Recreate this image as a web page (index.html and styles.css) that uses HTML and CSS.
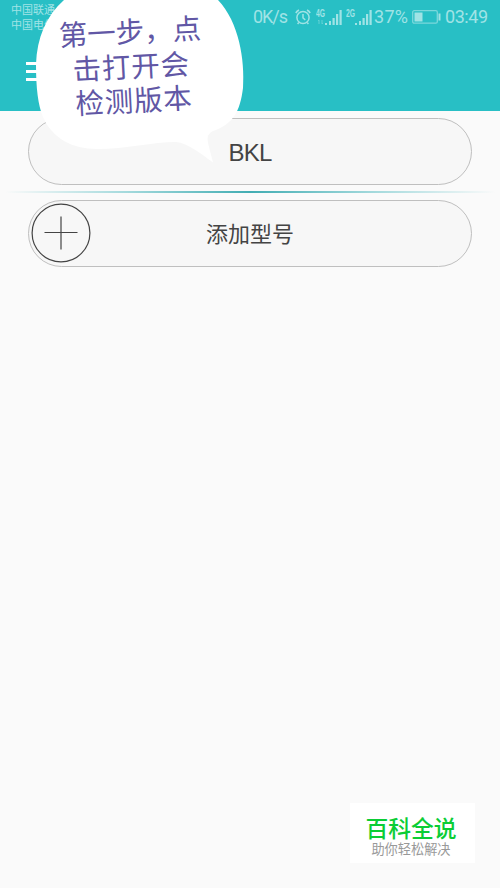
FILE: index.html
```html
<!DOCTYPE html>
<html lang="zh-CN">
<head>
<meta charset="utf-8">
<title>BKL</title>
<link rel="stylesheet" href="styles.css">
</head>
<body>
<header class="header">
  <div class="status">
    <div class="carriers"><span>中国联通</span><span>中国电信</span></div>
    <div class="indicators">
      <svg class="speed" width="36" height="20"><text x="0" y="16" textLength="35">0K/s</text></svg>
      <svg class="alarm" width="16" height="16" viewBox="0 0 16 16"><circle cx="8" cy="8.5" r="6.1"/><path d="M8 5v4l2.3 1.8M.8 4Q2 2 4 1M15.200 4Q14 2 12 1M3.800 13.500l-1.200 1.500M12.200 13.500l1.200 1.500"/></svg>
      <svg class="signal first" width="26" height="17" viewBox="0 0 26 17"><text x="0" y="7.5" textLength="9" lengthAdjust="spacingAndGlyphs">4G</text><path class="faint" d="M3 15v-4l-1 1M6 11v4l1-1"/><path d="M9 16v-2h2v2zM13 16v-4h2v4zM16.5 16V9h2.200V16zM20 16V5h2.200V16zM23.500 16V1h2.200V16z"/></svg>
      <svg class="signal" width="26" height="17" viewBox="0 0 26 17"><text x="0" y="7.5" textLength="9" lengthAdjust="spacingAndGlyphs">2G</text><path d="M9 16v-2h2v2zM13 16v-4h2v4zM16.500 16V9h2.200V16zM20 16V5h2.200V16zM23.500 16V1h2.200V16z"/></svg>
      <svg class="percent" width="36" height="20"><text x="0" y="16" textLength="34">37%</text></svg>
      <svg class="battery" width="29" height="14" viewBox="0 0 29 14"><rect class="case" x=".7" y=".7" width="24.600" height="12.500" rx="1.500"/><path d="M2.500 2.500h8v9h-8zM26.500 3.500h2v7h-2z"/></svg>
      <svg class="clock" width="44" height="20"><text x="0" y="16" textLength="43">03:49</text></svg>
    </div>
  </div>
  <svg class="menu" width="24" height="19" viewBox="0 0 24 19"><path d="M0 1.500h24M0 9.500h24M0 17.500h24"/></svg>
</header>
<main class="content">
  <div class="pill"><span class="model">BKL</span></div>
  <div class="divider"></div>
  <div class="pill">
    <svg class="add" width="60" height="60" viewBox="0 0 60 60"><circle cx="30" cy="30" r="28.900"/><path d="M13.500 29.500h33M30 13.500v33"/></svg>
    <span>添加型号</span>
  </div>
</main>
<aside class="bubble">
  <svg width="210" height="165" viewBox="35 0 210 165"><path d="M64 0C46 16 37 38 36 64C36 88 38 105 43 117C52 138 72 149 97 149C126 149 153 142 176 142C188 143 201 154 213 162.500L208 143Q206 134 213 131C233 124 240 112 243 88C245 60 239 22 218 0Z"/></svg>
  <div class="tip"><span class="line one">第一步，点</span><span class="line two">击打开会</span><span class="line three">检测版本</span></div>
</aside>
<aside class="brand"><strong>百科全说</strong><span>助你轻松解决</span></aside>
</body>
</html>
```
FILE: styles.css
```css
* { box-sizing: border-box; }
body {
  margin: 0;
  position: relative;
  height: 888px;
  overflow: hidden;
  background: #fafafa;
  color: #444;
  font-family: "Noto Sans CJK SC", sans-serif;
}
.header { height: 111px; background: #28bfc5; }
.status { height: 34px; display: flex; justify-content: space-between; padding: 2px 11px 0 11px; color: #a0e3e5; }
.carriers { display: flex; flex-direction: column; font-size: 11px; line-height: 15px; }
.indicators { display: flex; align-items: center; height: 30px; }
.indicators svg { display: block; flex: none; fill: #a0e3e5; }
.indicators text { font: 400 18px Roboto, sans-serif; }
.indicators .alarm { fill: none; stroke: #a0e3e5; stroke-width: 1.5; margin: 0 5px 0 6px; }
.indicators .signal text { font: 700 10px "Liberation Sans", sans-serif; }
.indicators .first { margin-right: 4px; }
.indicators .faint { fill: none; stroke: #62d1d5; }
.percent { margin-left: 2px; }
.battery { margin: 0 4px 0 2px; }
.indicators .case { fill: none; stroke: #7bd8dc; stroke-width: 1.3; }
.menu { display: block; margin: 28px 0 0 26px; fill: none; stroke: #fff; stroke-width: 3; }
.content { padding: 7px 28px 0; }
.pill {
  position: relative;
  display: flex;
  align-items: center;
  justify-content: center;
  height: 67px;
  padding-bottom: 3px;
  border: 1px solid #bfbfbf;
  border-radius: 34px;
  background: #f7f7f7;
  font-size: 22px;
}
.model { font-family: "Liberation Sans", sans-serif; font-size: 24px; padding-top: 6px; letter-spacing: -.8px; }
.add { position: absolute; left: 2px; top: 2px; fill: none; stroke: #444; stroke-width: 1.2; }
.divider { height: 2px; margin: 6px -28px 7px; background: linear-gradient(90deg, transparent 1%, #a5dadd 25%, #42adb3 50%, #a5dadd 75%, transparent 99%); }
.bubble { position: absolute; left: 35px; top: 0; width: 210px; height: 165px; }
.bubble svg { display: block; fill: #fff; }
.tip { position: absolute; left: 24px; top: 17px; display: flex; flex-direction: column; color: #6157a5; font-size: 28.5px; line-height: 34.5px; transform: rotate(-3deg); transform-origin: 0 20px; white-space: nowrap; }
.line { letter-spacing: .8px; }
.one { letter-spacing: -.1px; }
.two { padding-left: 12px; }
.three { padding-left: 13px; }
.brand { position: absolute; left: 350px; top: 803px; width: 125px; height: 60px; padding: 13px 3px 0 0; display: flex; flex-direction: column; align-items: center; background: #fff; }
.brand strong { font-size: 22.8px; line-height: 24px; height: 24px; font-weight: 500; color: #0bcd35; }
.brand span { font-size: 13.2px; line-height: 18px; color: #999; }
```
